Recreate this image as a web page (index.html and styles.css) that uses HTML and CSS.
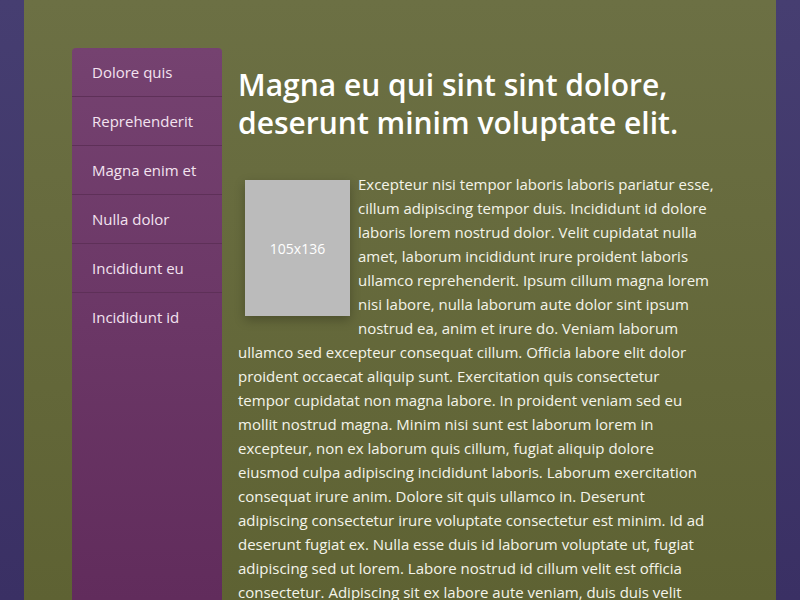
FILE: index.html
```html
<!DOCTYPE html>
<html lang="en">
<head>
<meta charset="utf-8">
<title>Magna eu qui sint sint dolore</title>
<link rel="stylesheet" href="styles.css">
</head>
<body>
<div class="page">
  <nav class="sidebar">
    <a class="nav-item" href="#">Dolore quis</a>
    <a class="nav-item" href="#">Reprehenderit</a>
    <a class="nav-item" href="#">Magna enim et</a>
    <a class="nav-item" href="#">Nulla dolor</a>
    <a class="nav-item" href="#">Incididunt eu</a>
    <a class="nav-item" href="#">Incididunt id</a>
  </nav>
  <main class="content">
    <h1 class="title">Magna eu qui sint sint dolore, deserunt minim voluptate elit.</h1>
    <div class="thumb">105x136</div>
    <p class="body-text">Excepteur nisi tempor laboris laboris pariatur esse, cillum adipiscing tempor duis. Incididunt id dolore laboris lorem nostrud dolor. Velit cupidatat nulla amet, laborum incididunt irure proident laboris ullamco reprehenderit. Ipsum cillum magna lorem nisi labore, nulla laborum aute dolor sint ipsum nostrud ea, anim et irure do. Veniam laborum ullamco sed excepteur consequat cillum. Officia labore elit dolor proident occaecat aliquip sunt. Exercitation quis consectetur tempor cupidatat non magna labore. In proident veniam sed eu mollit nostrud magna. Minim nisi sunt est laborum lorem in excepteur, non ex laborum quis cillum, fugiat aliquip dolore eiusmod culpa adipiscing incididunt laboris. Laborum exercitation consequat irure anim. Dolore sit quis ullamco in. Deserunt adipiscing consectetur irure voluptate consectetur est minim. Id ad deserunt fugiat ex. Nulla esse duis id laborum voluptate ut, fugiat adipiscing sed ut lorem. Labore nostrud id cillum velit est officia consectetur. Adipiscing sit ex labore aute veniam, duis duis velit dolore. Cillum nulla ipsum aliqua sint, eiusmod laboris magna est.</p>
  </main>
</div>
</body>
</html>
```
FILE: styles.css
```css
html, body {
  margin: 0;
  padding: 0;
}
body {
  background: linear-gradient(180deg, #463e71 0px, #3a3064 600px);
  background-attachment: fixed;
  font-family: "Open Sans", "Noto Sans", sans-serif;
  color: #f4f4ea;
}
.page {
  margin: 0 24px;
  min-height: 700px;
  background: linear-gradient(180deg, #6c7044 0px, #5e6233 600px);
  padding: 48px;
  display: flex;
  align-items: stretch;
  gap: 16px;
}
.sidebar {
  flex: 0 0 150px;
  display: flex;
  flex-direction: column;
  background: linear-gradient(180deg, #754270 0px, #612c5c 552px);
  border-radius: 4px;
}
.nav-item {
  display: block;
  padding: 12px 20px;
  font-size: 15px;
  line-height: 24px;
  color: #f3e3f0;
  text-decoration: none;
  border-bottom: 1px solid #5e3058;
}
.nav-item:last-child {
  border-bottom: none;
}
.content {
  flex: 0 1 476px;
  min-width: 0;
}
.title {
  margin: 18px 0 30px;
  font-size: 30px;
  line-height: 38px;
  font-weight: 600;
  color: #ffffff;
}
.body-text {
  margin: 0;
  font-size: 15px;
  line-height: 24px;
}
.thumb {
  float: left;
  width: 105px;
  height: 136px;
  margin: 8px 8px 12px 7px;
  background: #bbbbbb;
  color: #ffffff;
  font-size: 14px;
  display: flex;
  align-items: center;
  justify-content: center;
  box-shadow: 0 4px 10px rgba(0, 0, 0, 0.25);
}
```
